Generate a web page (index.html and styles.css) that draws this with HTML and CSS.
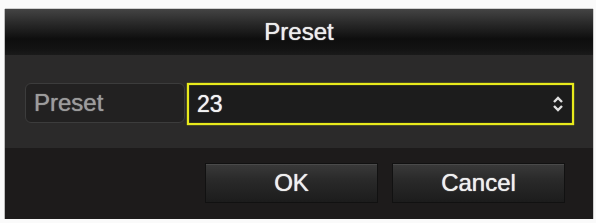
FILE: index.html
```html
<!DOCTYPE html>
<html>
<head>
<meta charset="utf-8">
<link rel="stylesheet" href="styles.css">
</head>
<body>
<div class="dialog">
  <div class="title">Preset</div>
  <div class="content">
    <div class="label">Preset</div>
    <div class="field">
      <span class="value">23</span>
      <svg class="spin" width="12" height="18" viewBox="0 0 12 18">
        <path d="M2 7 L6 3 L10 7" fill="none" stroke="#e0e0e0" stroke-width="2.4"/>
        <path d="M2 11 L6 15 L10 11" fill="none" stroke="#e0e0e0" stroke-width="2.4"/>
      </svg>
    </div>
  </div>
  <div class="footer">
    <div class="btn">OK</div>
    <div class="btn">Cancel</div>
  </div>
</div>
</body>
</html>
```
FILE: styles.css
```css
html, body {
  margin: 0;
  padding: 0;
  background: #fafafa;
}
body {
  padding: 9px 3px 0 5px;
  font-family: "Liberation Sans", Arial, sans-serif;
}
.dialog {
  width: 588px;
  height: 210px;
  display: flex;
  flex-direction: column;
  box-shadow: -1px 0 0 #bdbdbd, 1px 0 0 #cfcfcf, 0 -1px 0 #d0d0d0;
}
.title {
  height: 46px;
  display: flex;
  align-items: center;
  justify-content: center;
  color: #ededed;
  font-size: 24px;
  text-shadow: 0 0 1px #ffffff;
  background: linear-gradient(#444444 0%, #2a2a2a 30%, #0e0e0e 65%, #121212 85%, #1a1a1a 100%);
}
.content {
  height: 93px;
  background: #2b2a2a;
  box-sizing: border-box;
  padding: 28px 19px 0 20px;
  display: flex;
  align-items: flex-start;
  gap: 2px;
}
.label {
  width: 160px;
  height: 40px;
  box-sizing: border-box;
  border: 1px solid #3c3c3c;
  border-radius: 6px;
  background: #222121;
  color: #9c9c9c;
  font-size: 24px;
  text-shadow: 0 0 1px #9c9c9c;
  display: flex;
  align-items: center;
  padding-left: 8px;
}
.field {
  flex: 1;
  height: 42px;
  box-sizing: border-box;
  border: 2px solid #e8ea1c;
  box-shadow: 0 0 1px #e8ea1c, inset 0 0 1px #e8ea1c;
  background: #1c1c1c;
  display: flex;
  align-items: center;
  justify-content: space-between;
  padding: 0 8px 0 8px;
  color: #f2f2f2;
  font-size: 23px;
  text-shadow: 0 0 1px #ffffff;
}
.spin {
  display: block;
}
.footer {
  flex: 1;
  background: #1d1b1b;
  box-sizing: border-box;
  padding: 15px 28px 0 0;
  display: flex;
  justify-content: flex-end;
  align-items: flex-start;
  gap: 14px;
}
.btn {
  width: 173px;
  height: 40px;
  box-sizing: border-box;
  border: 1px solid #111;
  background: linear-gradient(#3a3a3a 0%, #2a2a2a 40%, #1c1c1c 100%);
  box-shadow: inset 0 1px 0 #4a4a4a;
  color: #f0f0f0;
  font-size: 24px;
  text-shadow: 0 0 1px #ffffff;
  display: flex;
  align-items: center;
  justify-content: center;
}
```
